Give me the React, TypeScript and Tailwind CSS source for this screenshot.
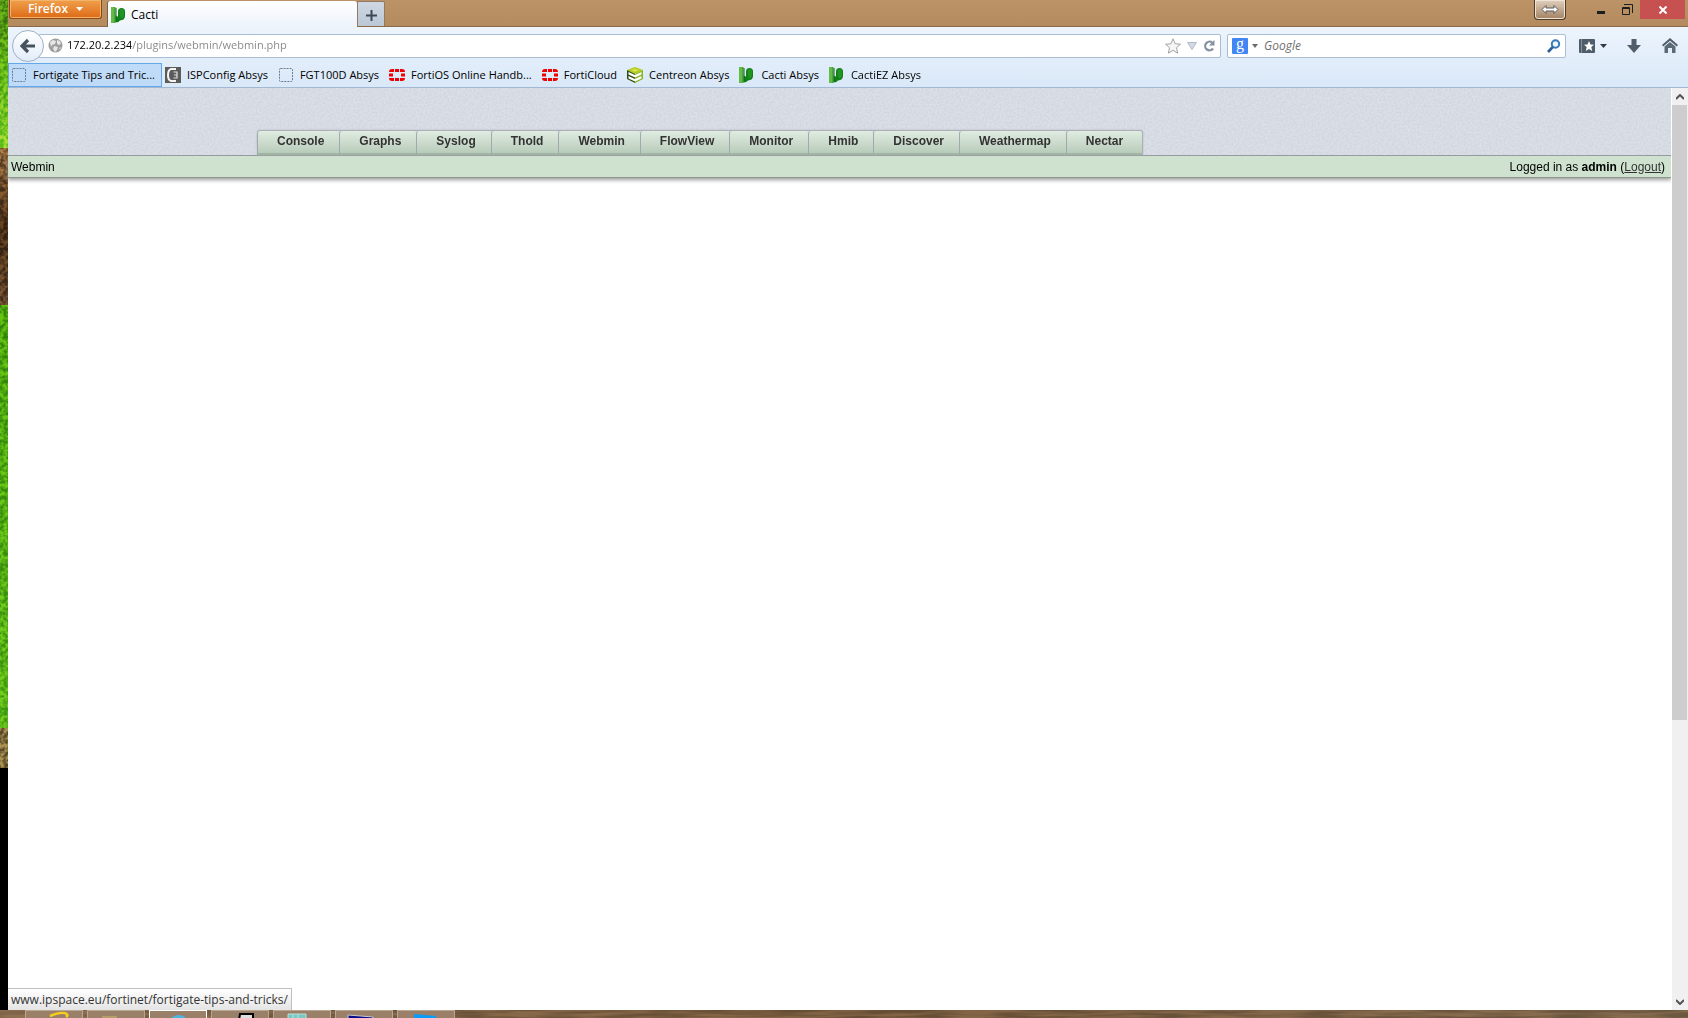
import { ReactNode } from "react";

const menuTabs = ["Console", "Graphs", "Syslog", "Thold", "Webmin", "FlowView", "Monitor", "Hmib", "Discover", "Weathermap", "Nectar"];

const CactiIcon = () => (
  <svg width="16" height="16" viewBox="0 0 16 16" className="shrink-0">
    <path d="M4.500 8q1 1.500 2.500 1.500V4.500q0-3.500 3.500-3.500t3.500 3.500V9q0 4-5 4.500-1 2-4.500 2z" fill="#12801a" />
    <path d="M8.500 4q0-2 2.500-2t2 3v3q0 3-3 3.500-1.500-3-1.500-7.500z" fill="#229422" />
    <path d="M0 0h4.500v16H0z" fill="#46a832" />
    <path d="M0 0h3v16H0z" fill="#62bb44" />
    <path d="M5 1v14" stroke="#0b5f12" />
  </svg>
);

const BlankIcon = () => (
  <svg width="16" height="16" viewBox="0 0 16 16" className="shrink-0">
    <rect x="1.5" y="1.5" width="13" height="13" rx="1" fill="none" stroke="#6b7b8c" strokeDasharray="2 1" />
  </svg>
);

const IspIcon = () => (
  <svg width="16" height="16" viewBox="0 0 16 16" className="shrink-0">
    <rect width="16" height="16" fill="#5b5b5b" />
    <path d="M11 2H6Q3 3 3 8t3 6h5" fill="none" stroke="#f4f4f4" strokeWidth="2" />
    <path d="M8.500 5h3.500v6H8.500M9 8h3" fill="none" stroke="#e0e0e0" strokeWidth="1.200" />
  </svg>
);

const FortiIcon = () => (
  <svg width="16" height="16" viewBox="0 0 16 16" className="shrink-0" fill="#f00000">
    <path d="M6 2h4v3H6zM6 11h4v3H6zM0 6.500h4v3H0zM12 6.500h4v3h-4z" />
    <path d="M5 2v3H0q0-3 3-3zM11 2v3h5q0-3-3-3zM5 14v-3H0q0 3 3 3zM11 14v-3h5q0 3-3 3z" />
  </svg>
);

const CentreonIcon = () => (
  <svg width="16" height="16" viewBox="0 0 16 16" className="shrink-0">
    <path d="M8 0l8 3-8 4-8-4z" fill="#b5cc1a" />
    <path d="M8 1.500l4 1.500-4 2-4-2z" fill="#d3e04a" />
    <path d="M0 3l8 4v9l-8-4z" fill="#2f4a17" />
    <path d="M16 3L8 7v9l8-4z" fill="#84b51c" />
    <path d="M1.500 5L8 8l6.500-3v2.500L8 10.500l-6.500-3zM1.500 9L8 12l6.500-3v2.500l-6.500 3-6.500-3z" fill="#fff" />
  </svg>
);

const Grain = ({ id, frequency, opacity }: { id: string; frequency: string; opacity: number }) => (
  <svg className="absolute inset-0 h-full w-full pointer-events-none mix-blend-overlay" style={{ opacity }}>
    <filter id={id} colorInterpolationFilters="sRGB">
      <feTurbulence type="fractalNoise" baseFrequency={frequency} numOctaves="2" />
      <feColorMatrix values="3 0 0 0 -1 3 0 0 0 -1 3 0 0 0 -1 0 0 0 0 1" />
    </filter>
    <rect width="100%" height="100%" filter={`url(#${id})`} />
  </svg>
);

const bookmarks: { label: string; icon: ReactNode; active?: boolean }[] = [
  { label: "Fortigate Tips and Tric...", icon: <BlankIcon />, active: true },
  { label: "ISPConfig Absys", icon: <IspIcon /> },
  { label: "FGT100D Absys", icon: <BlankIcon /> },
  { label: "FortiOS Online Handb...", icon: <FortiIcon /> },
  { label: "FortiCloud", icon: <FortiIcon /> },
  { label: "Centreon Absys", icon: <CentreonIcon /> },
  { label: "Cacti Absys", icon: <CactiIcon /> },
  { label: "CactiEZ Absys", icon: <CactiIcon /> },
];

const WindowButtons = () => (
  <div className="mr-[3px] flex h-[19px]">
    <button aria-label="Minimize" className="flex w-[26px] items-center justify-center">
      <svg width="8" height="8"><path d="M0 6.500h8" stroke="#1d1d1d" strokeWidth="3" /></svg>
    </button>
    <button aria-label="Restore" className="flex w-[26px] items-center justify-center">
      <svg width="11" height="11"><path d="M.5 3.500h7v7h-7zM.5 4.500h7M2 .5h8.500V9" fill="none" stroke="#1d1d1d" /></svg>
    </button>
    <button aria-label="Close" className="flex w-[45px] items-center justify-center bg-[#c75050]">
      <svg width="8" height="8"><path d="M.5.5l7 7M7.500.5l-7 7" stroke="#fff" strokeWidth="2" /></svg>
    </button>
  </div>
);

const TitleBar = () => (
  <div className="flex h-[27px] items-start border-b border-[#8a6a48] bg-linear-to-b from-[#bc9366] to-[#b48b5f]">
    <button className="ml-px flex h-[19px] w-[93px] items-center justify-center gap-2 rounded-b-[3px] border border-t-0 border-[#8b4a14] bg-linear-to-b from-[#f0a04a] to-[#dd6a12] pb-px text-[12px] font-semibold text-white shadow-[inset_0_0_0_1px_#f4b36a]">
      Firefox
      <svg width="7" height="4"><path d="M0 0h7L3.500 4z" fill="#fff" /></svg>
    </button>
    <div className="ml-[5px] mt-px flex h-[26px] w-[250px] items-center gap-[4px] rounded-t-[3px] border-l border-[#7d6040] bg-linear-to-b from-white to-[#edf4fc] pl-[3px] pt-px text-[12px] text-black">
      <CactiIcon />
      Cacti
    </div>
    <button aria-label="New tab" className="mt-px flex h-[25px] w-[28px] items-center justify-center rounded-t-[2px] border border-b-0 border-[#8f7a66] bg-linear-to-b from-[#cfd8e2] to-[#bac7d5] pt-[2px]">
      <svg width="11" height="11"><path d="M5.500 0v11M0 5.500h11" stroke="#3c4854" strokeWidth="2" /></svg>
    </button>
    <div className="flex-1" />
    <button aria-label="Move" className="mr-[22px] flex h-[20px] w-[32px] items-center justify-center rounded-b-[4px] border border-t-0 border-[#4e3b28] bg-linear-to-b from-[#e0d0be] to-[#a38362] shadow-[inset_0_0_0_1px_#efe4d6]">
      <svg width="18" height="9" viewBox="0 0 18 9"><path d="M1 4.500l4-4v2.500h8V.5l4 4-4 4V6H5v2.500z" fill="#fff" stroke="#5a5a5a" /></svg>
    </button>
    <WindowButtons />
  </div>
);

const NavBar = () => (
  <div className="flex h-[35px] items-center pt-[2px]">
    <button aria-label="Back" className="z-10 ml-1 -mr-[6px] flex size-8 shrink-0 items-center justify-center rounded-full border border-[#9fb1c6] bg-linear-to-b from-white to-[#e3edf8]">
      <svg width="16" height="16" viewBox="0 0 16 16"><path d="M15 8H3M8 2L2 8l6 6" fill="none" stroke="#45535f" strokeWidth="3.200" /></svg>
    </button>
    <div className="flex h-[24px] min-w-0 flex-1 items-center rounded-[2px] border border-[#a9bdd4] bg-white pl-[9px] pr-[5px]">
      <svg width="15" height="15" viewBox="0 0 15 15" className="shrink-0">
        <circle cx="7.500" cy="7.500" r="7" fill="#9d9d9d" />
        <path d="M2 4l3-2 3 1-1 3-3 1-1 2zM9 2l3 1 1 3-3 1-1-2zM6 8l4 1-1 3-2 2-2-3zM12 9l1 1-2 2z" fill="#e6e6e6" />
      </svg>
      <input
        type="text"
        aria-label="Address"
        defaultValue="172.20.2.234/plugins/webmin/webmin.php"
        className="ml-[4px] min-w-0 flex-1 bg-linear-to-r from-black from-[64px] to-[#858585] to-[64px] bg-clip-text text-[11px] text-transparent caret-black outline-none"
      />
      <div className="flex items-center gap-[6px]">
        <button aria-label="Bookmark this page">
          <svg width="16" height="16" viewBox="0 0 16 16"><path d="M8 .8l2.200 5 5.300.4-4 3.500 1.200 5.500L8 12.300l-4.700 2.900 1.200-5.500-4-3.500 5.300-.4z" fill="#f5f5f5" stroke="#a3a3a3" /></svg>
        </button>
        <button aria-label="History">
          <svg width="10" height="8"><path d="M.5.5h9L5 7.500z" fill="#d3dae3" stroke="#b0bac6" /></svg>
        </button>
        <button aria-label="Reload">
          <svg width="12" height="12" viewBox="0 0 12 12"><path d="M9 2.500A4.300 4.300 0 1 0 10 8.500" fill="none" stroke="#84909d" strokeWidth="2.200" /><path d="M11.500 0v5.500H6z" fill="#84909d" /></svg>
        </button>
      </div>
    </div>
    <div className="ml-[6px] flex h-[24px] w-[339px] items-center rounded-[2px] border border-[#a9bdd4] bg-white pl-[4px] pr-[4px]">
      <button aria-label="Search engine" className="flex items-center gap-[4px]">
        <span className="flex size-4 items-center justify-center rounded-[1px] bg-[#4285f4] pb-[3px] font-['Liberation_Serif',serif] text-[16px] leading-none text-white">g</span>
        <svg width="6" height="4"><path d="M0 0h6L3 4z" fill="#6b6b6b" /></svg>
      </button>
      <input type="text" aria-label="Search" placeholder="Google" className="ml-[6px] min-w-0 flex-1 text-[12px] italic outline-none placeholder:text-[#707070]" />
      <button aria-label="Search">
        <svg width="14" height="14" viewBox="0 0 14 14"><circle cx="8.500" cy="5" r="3.700" fill="#eef6fc" stroke="#3579b8" strokeWidth="2" /><path d="M5.800 8L1 13" stroke="#2b5d96" strokeWidth="2.600" /></svg>
      </button>
    </div>
    <div className="flex items-center pl-[13px] pr-[10px]">
      <button aria-label="Bookmarks" className="flex items-center gap-[5px]">
        <svg width="16" height="14" viewBox="0 0 16 14"><rect width="16" height="14" rx="1" fill="#4f5c69" /><path d="M2.500 0v14" stroke="#84909d" /><path d="M10 2l1.500 3.500 3.500.2-2.700 2.400.9 3.900L10 10l-3.200 2 .9-3.900L5 5.700l3.500-.2z" fill="#fff" /></svg>
        <svg width="7" height="4"><path d="M0 0h7L3.500 4z" fill="#303a44" /></svg>
      </button>
      <button aria-label="Downloads" className="ml-[20px]">
        <svg width="14" height="14" viewBox="0 0 14 14"><path d="M4.500 0h5v6H14l-7 8-7-8h4.500z" fill="#505d6a" /></svg>
      </button>
      <button aria-label="Home" className="ml-[21px]">
        <svg width="16" height="15" viewBox="0 0 16 15"><path d="M8 0l8 7-1.200 1.500L8 2.700 1.200 8.500 0 7z" fill="#4f5c69" /><path d="M8 4l5.500 4.500V15H10v-5H6v5H2.500V8.500z" fill="#5c6976" /></svg>
      </button>
    </div>
  </div>
);

const BookmarksBar = () => (
  <div className="flex h-[26px] items-center border-b border-[#a3b9d3]">
    {bookmarks.map((b) => (
      <a
        key={b.label}
        href="#"
        className={`flex h-6 items-center gap-[6px] whitespace-nowrap border pl-[2px] pr-[6px] pt-px text-[11px] text-black ${b.active ? "border-[#66a7e8] bg-[#bfdbf8]" : "border-transparent"}`}
      >
        {b.icon}
        {b.label}
      </a>
    ))}
  </div>
);

const CactiPage = () => (
  <main className="flex min-w-0 flex-1 flex-col bg-white font-['Liberation_Sans',sans-serif] text-[12px]">
    <header className="relative flex h-[68px] items-end border-b border-[#969a9e] bg-[#d7dce4] pl-[249px]">
      <Grain id="paper" frequency="0.5" opacity={0.12} />
      <nav className="relative flex rounded-t-[3px] border-r border-t border-[#adb0b8] shadow-[0_0_2px_#b0b4bc]">
        {menuTabs.map((tab) => (
          <a key={tab} href="#" className="h-6 rounded-t-[3px] border-b-2 border-l border-b-[#a2b5a5] border-l-[#a3a7ae] bg-linear-to-b from-[#e0ece1] to-[#b8ccba] pl-[19px] pr-[15px] pt-px text-[12px] font-bold leading-[18px] text-[#333] last:pr-[19px]">
            {tab}
          </a>
        ))}
      </nav>
    </header>
    <div className="flex h-[22px] items-center justify-between border-b border-[#8f9890] bg-[#cfe2cf] pl-[3px] pr-[6px] text-black shadow-[0_2px_4px_#999]">
      <span>Webmin</span>
      <span>
        Logged in as <b>admin</b> (<a href="#" className="text-[#333] underline">Logout</a>)
      </span>
    </div>
  </main>
);

const ScrollBar = () => (
  <div className="flex w-[17px] flex-col items-center border-l border-white bg-[#f0f0f0]">
    <button aria-label="Scroll up" className="flex h-[17px] w-full items-center justify-center">
      <svg width="8" height="6"><path d="M0 5l4-4 4 4" fill="none" stroke="#555" strokeWidth="2" /></svg>
    </button>
    <div className="mr-px w-[15px] grow-[615] bg-[#cdcdcd]" />
    <div className="grow-[273]" />
    <button aria-label="Scroll down" className="flex h-[17px] w-full items-center justify-center">
      <svg width="8" height="6"><path d="M0 1l4 4 4-4" fill="none" stroke="#555" strokeWidth="2" /></svg>
    </button>
  </div>
);

const taskIcons: { name: string; art: ReactNode }[] = [
  { name: "Internet Explorer", art: <path d="M24 5Q36 0 41 3M40 6q3-2 0-3" fill="none" stroke="#f6cf1c" strokeWidth="2.500" /> },
  { name: "Explorer", art: <path d="M14 5h15v3H14z" fill="#b89c6c" /> },
  { name: "Browser", art: <path d="M20 8q9-8 17 0z" fill="#48b8e0" /> },
  { name: "Terminal", art: <path d="M28 3h13v6H27z" fill="#ddd" stroke="#000" strokeWidth="2" /> },
  { name: "Server", art: <path d="M14 3h18v5H14zM19 3v5M24 3v5" fill="#78c8c4" stroke="#b8e0dc" /> },
  { name: "Remote session", art: <path d="M12 4l25 2v3H12z" fill="#0a0a8c" stroke="#ccc" /> },
  { name: "Desktop", art: <path d="M16 3l22 2v4H16z" fill="#0a9cf8" /> },
];

const TaskBar = () => (
  <footer className="relative flex h-2 overflow-hidden bg-linear-to-r from-[#806448] via-[#74583c] to-[#7a6248]">
    <Grain id="wood" frequency="0.02 0.3" opacity={0.12} />
    <div className="relative flex gap-1 pl-[25px]">
      {taskIcons.map((t, i) => (
        <button key={t.name} aria-label={t.name} className={`h-10 w-[58px] border bg-[#9a8068] ${i === 2 ? "border-white" : "border-[#b8a592]"}`}>
          <svg width="56" height="39">{t.art}</svg>
        </button>
      ))}
    </div>
  </footer>
);

const Wallpaper = () => (
  <div className="flex w-2 shrink-0 flex-col bg-black">
    <div className="relative isolate">
      <div className="h-[148px] bg-linear-to-b from-[#4d8a12] via-[#60b516] to-[#86cf2a]" />
      <div className="h-[157px] bg-linear-to-b from-[#8a6238] via-[#4a3018] to-[#604428]" />
      <div className="h-[423px] bg-linear-to-b from-[#4aa30c] to-[#58b416]" />
      <div className="h-10 bg-[#7f6c3c]" />
      <Grain id="grass" frequency="0.25" opacity={0.35} />
    </div>
  </div>
);

export default function App() {
  return (
    <div className="flex min-h-screen flex-col font-['Open_Sans',sans-serif]">
      <div className="flex flex-1">
        <Wallpaper />
        <div className="relative flex min-w-0 flex-1 flex-col">
          <TitleBar />
          <div className="bg-linear-to-b from-[#edf4fc] to-[#d9e8f8]">
            <NavBar />
            <BookmarksBar />
          </div>
          <div className="flex flex-1">
            <CactiPage />
            <ScrollBar />
          </div>
          <div className="absolute bottom-0 left-0 flex h-[22px] items-center border-r border-t border-[#c0c0c0] bg-linear-to-b from-white to-[#e4e4e4] px-[3px] text-[12px] text-[#333]">
            www.ipspace.eu/fortinet/fortigate-tips-and-tricks/
          </div>
        </div>
      </div>
      <TaskBar />
    </div>
  );
}
